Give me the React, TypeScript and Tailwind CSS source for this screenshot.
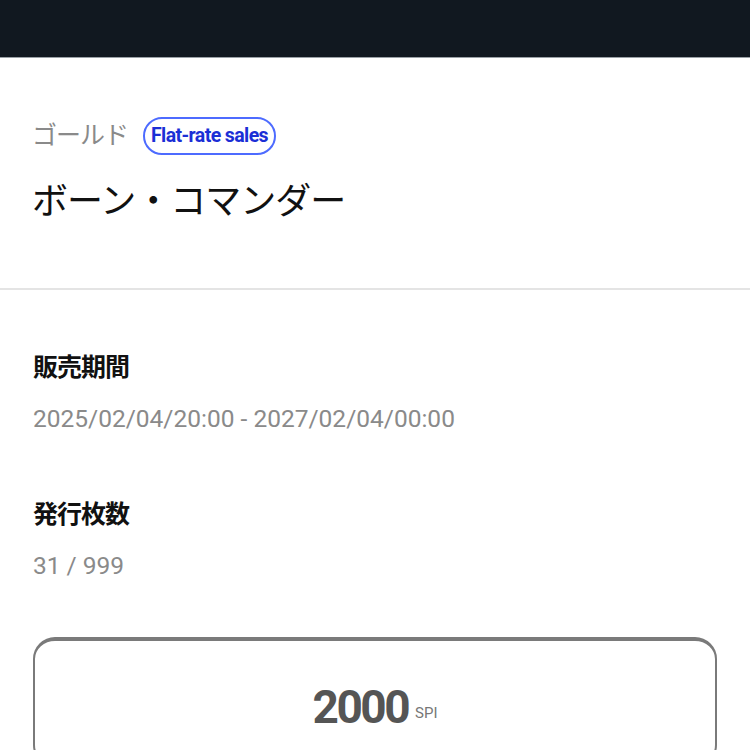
const jp = "font-['Roboto','Noto_Sans_CJK_JP',sans-serif]";

function Field({ label, value }: { label: string; value: string }) {
  return (
    <div className="flex flex-col">
      <div className="text-[25px] leading-[34px] font-bold text-[#111] tracking-[-1px]">{label}</div>
      <div className="mt-[19px] text-[24.5px] leading-[30px] text-[#8a8a8a]">{value}</div>
    </div>
  );
}

export default function App() {
  return (
    <div className={`${jp} w-[750px] h-[750px] overflow-hidden bg-white`}>
      <header className="h-[58px] bg-[#111820] border-b border-[#9aa0a6]" />

      <section className="pl-[32px] pt-[59px] pb-[63px] border-b-2 border-[#e4e4e4]">
        <div className="flex items-center gap-[15px]">
          <span className="text-[25px] leading-[34px] text-[#8a8a8a] tracking-[-1px]">ゴールド</span>
          <span className="rounded-full border-2 border-[#4d6bff] px-[6px] h-[38px] flex items-center text-[19.5px] font-bold text-[#1b2fd6] tracking-[-0.6px]">
            Flat-rate sales
          </span>
        </div>
        <h1 className="mt-[24px] text-[36px] leading-[46px] text-[#111] tracking-[-1px]">ボーン・コマンダー</h1>
      </section>

      <section className="px-[33px] pt-[61px] flex flex-col gap-[64px]">
        <Field label="販売期間" value="2025/02/04/20:00 - 2027/02/04/00:00" />
        <Field label="発行枚数" value="31 / 999" />
        <button className="-mt-[8px] h-[130px] rounded-[22px] border-2 border-[#7a7a7a] border-t-[4px] flex items-start justify-center pt-[38px]">
          <span className="text-[46px] leading-[56px] font-bold text-[#555] tracking-[-2.5px]">2000</span>
          <span className="ml-[7px] mt-[23px] text-[15px] text-[#777]">SPI</span>
        </button>
      </section>
    </div>
  );
}
